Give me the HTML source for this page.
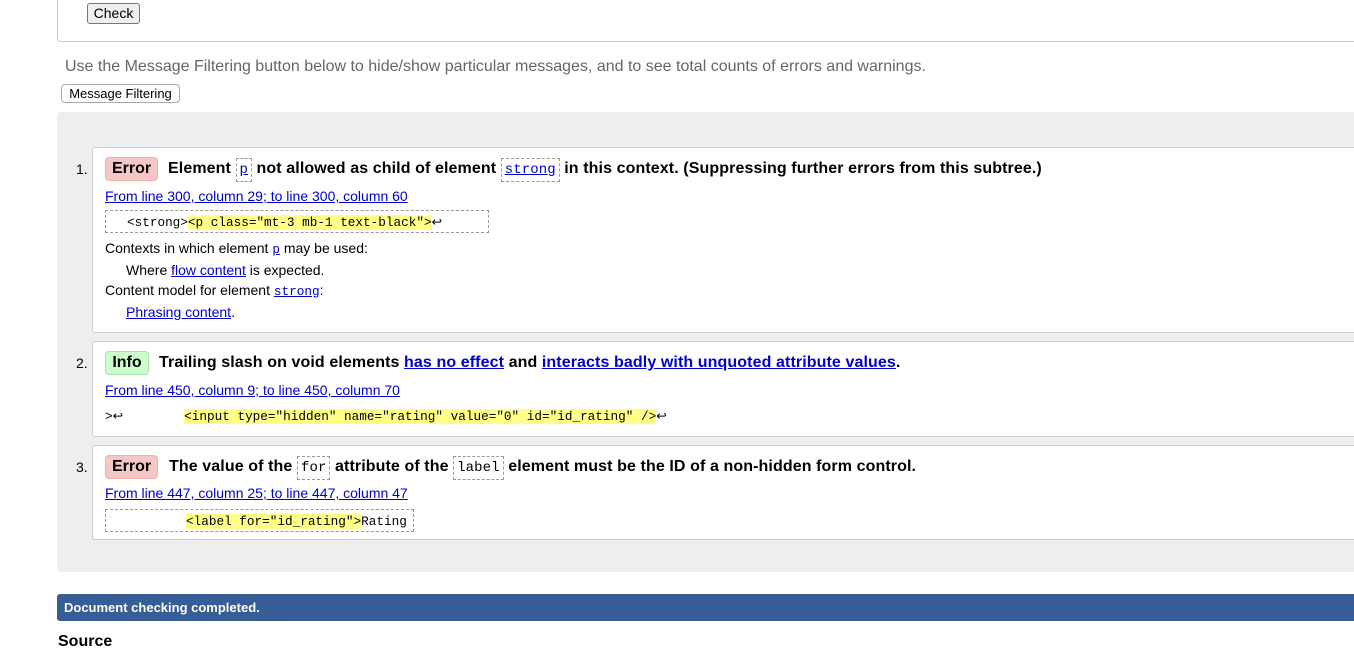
<!DOCTYPE html>
<html><head><meta charset="utf-8"><style>
body{margin:0;width:1354px;height:642px;overflow:hidden;background:#fff;font-family:"Liberation Sans",Arial,sans-serif;position:relative;color:#000}
.a{position:absolute;white-space:nowrap}
.btn{position:absolute;border:1px solid #767676;background:#efefef;border-radius:3px;font-size:13px;text-align:center;box-sizing:border-box}
.box{position:absolute;left:92px;right:-5px;background:#fff;border:1px solid #ccc;border-radius:3px}
.num{position:absolute;left:76px;font-size:14px}
.badge{position:absolute;height:22px;border-radius:4px;font-weight:bold;font-size:16px;line-height:22px;text-align:center}
.err{background:#f6c7c7;border:1px solid #f0b0b0}
.inf{background:#cfc;border:1px solid #aeddae}
.h{font-weight:bold;font-size:16px;letter-spacing:0.1px}
a{color:#00c;text-decoration:underline}
.lnk{font-size:14px;color:#00c;text-decoration:underline}
code{font-family:"Liberation Mono",monospace;font-size:12.7px}
.cd{border:1px dashed #999;padding:3px 3px;font-weight:normal;background:#fff}
.hl{background:#ff8}
.s{font-size:14px}
</style></head><body>
<div style="position:absolute;left:57px;top:-5px;right:-5px;height:45px;border:1px solid #ccc;border-radius:4px"></div>
<div class="btn" style="left:87px;top:3px;width:53px;height:21px;line-height:19px;font-size:14px">Check</div>
<div class="a" style="left:65px;top:58px;font-size:16px;color:#666">Use the Message Filtering button below to hide/show particular messages, and to see total counts of errors and warnings.</div>
<div class="btn" style="left:61px;top:84px;width:119px;height:19px;line-height:17px;border-color:#aaa;background:#fff;border-radius:4px">Message Filtering</div>
<div style="position:absolute;left:57px;top:112px;right:-5px;height:460px;background:#eee;border-radius:4px"></div>

<div class="box" style="top:147px;height:184px"></div>
<div class="num" style="top:161px">1.</div>
<div class="badge err" style="left:105px;top:157px;width:51px">Error</div>
<div class="a h" style="left:168px;top:160px">Element <code class="cd" style="font-size:14px"><a>p</a></code> not allowed as child of element <code class="cd" style="font-size:14px"><a>strong</a></code> in this context. (Suppressing further errors from this subtree.)</div>
<div class="a lnk" style="left:105px;top:188px">From line 300, column 29; to line 300, column 60</div>
<div class="a" style="left:105px;top:210px;width:382px;height:21px;border:1px dashed #999"></div>
<div class="a" style="left:127px;top:213px"><code>&lt;strong&gt;<span class="hl">&lt;p class="mt-3 mb-1 text-black"&gt;</span>↩</code></div>
<div class="a s" style="left:105px;top:240px">Contexts in which element <code style="color:#00c;text-decoration:underline">p</code> may be used:</div>
<div class="a s" style="left:126px;top:262px">Where <a>flow content</a> is expected.</div>
<div class="a s" style="left:105px;top:282px">Content model for element <code style="color:#00c;text-decoration:underline">strong</code>:</div>
<div class="a s" style="left:126px;top:304px"><a>Phrasing content</a>.</div>

<div class="box" style="top:341px;height:94px"></div>
<div class="num" style="top:355px">2.</div>
<div class="badge inf" style="left:105px;top:351px;width:42px">Info</div>
<div class="a h" style="left:159px;top:354px">Trailing slash on void elements <a>has no effect</a> and <a>interacts badly with unquoted attribute values</a>.</div>
<div class="a lnk" style="left:105px;top:382px">From line 450, column 9; to line 450, column 70</div>
<div class="a" style="left:105px;top:407px"><code>&gt;↩&nbsp;&nbsp;&nbsp;&nbsp;&nbsp;&nbsp;&nbsp;&nbsp;<span class="hl">&lt;input type="hidden" name="rating" value="0" id="id_rating" /&gt;</span>↩</code></div>

<div class="box" style="top:445px;height:93px"></div>
<div class="num" style="top:459px">3.</div>
<div class="badge err" style="left:105px;top:455px;width:51px">Error</div>
<div class="a h" style="left:169px;top:458px">The value of the <code class="cd" style="font-size:14px">for</code> attribute of the <code class="cd" style="font-size:14px">label</code> element must be the ID of a non-hidden form control.</div>
<div class="a lnk" style="left:105px;top:485px">From line 447, column 25; to line 447, column 47</div>
<div class="a" style="left:105px;top:509px;width:307px;height:21px;border:1px dashed #999"></div>
<div class="a" style="left:186px;top:512px"><code><span class="hl">&lt;label for="id_rating"&gt;</span>Rating</code></div>

<div style="position:absolute;left:57px;top:594px;right:-5px;height:27px;background:#365d95;border-radius:3px"></div>
<div class="a" style="left:64px;top:600px;color:#fff;font-weight:bold;font-size:13px">Document checking completed.</div>
<div class="a" style="left:58px;top:633px;font-weight:bold;font-size:16px">Source</div>
</body></html>
